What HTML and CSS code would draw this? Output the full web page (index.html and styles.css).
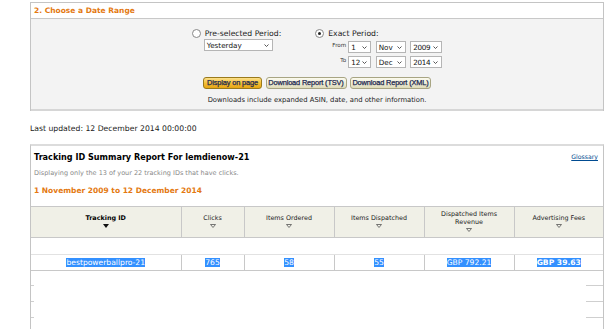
FILE: index.html
```html
<!DOCTYPE html>
<html>

	<head>
		<meta charset="UTF-8">
		<title>Tracking ID Summary Report</title>
		<link rel="stylesheet" href="styles.css">
	</head>

	<body>
		<div class="page">
			<div class="range">
				<div class="range-head">2. Choose a Date Range</div>
				<div class="range-body">
					<div class="periods">
						<div class="period">
							<div class="opt"><span class="radio"></span>Pre-selected Period:</div>
							<span class="sel sel-pre">Yesterday<svg width="5" height="3" viewBox="0 0 5 3"><path d="M0.5 0.5 L2.5 2.5 L4.5 0.5" fill="none" stroke="#444" stroke-width="0.9"/></svg></span>
						</div>
						<div class="period">
							<div class="opt"><span class="radio on"></span>Exact Period:</div>
							<div class="dates">
								<div class="date-row">
									<span class="date-lbl">From</span>
									<span class="sel sel-day">1<svg width="5" height="3" viewBox="0 0 5 3"><path d="M0.5 0.5 L2.5 2.5 L4.5 0.5" fill="none" stroke="#444" stroke-width="0.9"/></svg></span>
									<span class="sel sel-mon">Nov<svg width="5" height="3" viewBox="0 0 5 3"><path d="M0.5 0.5 L2.5 2.5 L4.5 0.5" fill="none" stroke="#444" stroke-width="0.9"/></svg></span>
									<span class="sel sel-year">2009<svg width="5" height="3" viewBox="0 0 5 3"><path d="M0.5 0.5 L2.5 2.5 L4.5 0.5" fill="none" stroke="#444" stroke-width="0.9"/></svg></span>
								</div>
								<div class="date-row">
									<span class="date-lbl">To</span>
									<span class="sel sel-day">12<svg width="5" height="3" viewBox="0 0 5 3"><path d="M0.5 0.5 L2.5 2.5 L4.5 0.5" fill="none" stroke="#444" stroke-width="0.9"/></svg></span>
									<span class="sel sel-mon">Dec<svg width="5" height="3" viewBox="0 0 5 3"><path d="M0.5 0.5 L2.5 2.5 L4.5 0.5" fill="none" stroke="#444" stroke-width="0.9"/></svg></span>
									<span class="sel sel-year">2014<svg width="5" height="3" viewBox="0 0 5 3"><path d="M0.5 0.5 L2.5 2.5 L4.5 0.5" fill="none" stroke="#444" stroke-width="0.9"/></svg></span>
								</div>
							</div>
						</div>
					</div>
					<div class="buttons">
						<span class="btn btn-go">Display on page</span>
						<span class="btn btn-dl">Download Report (TSV)</span>
						<span class="btn btn-dl">Download Report (XML)</span>
					</div>
					<p class="note">Downloads include expanded ASIN, date, and other information.</p>
				</div>
			</div>

			<p class="updated">Last updated: 12 December 2014 00:00:00</p>

			<div class="report">
				<div class="report-head">
					<div class="title-row">
						<h2>Tracking ID Summary Report For lemdienow-21</h2>
						<a href="#">Glossary</a>
					</div>
					<p class="sub">Displaying only the 13 of your 22 tracking IDs that have clicks.</p>
					<h3>1 November 2009 to 12 December 2014</h3>
				</div>
				<table class="grid">
					<colgroup>
						<col class="c1"><col class="c2"><col class="c3"><col class="c4"><col class="c5"><col class="c6">
					</colgroup>
					<tr class="head">
						<th><b>Tracking ID</b><br><svg width="6" height="4" viewBox="0 0 6 4"><path d="M0 0 H6 L3 4 Z" fill="#111"/></svg></th>
						<th>Clicks<br><svg width="6" height="4" viewBox="0 0 6 4"><path d="M0.5 0.5 H5.5 L3 3.5 Z" fill="none" stroke="#555" stroke-width="0.8"/></svg></th>
						<th>Items Ordered<br><svg width="6" height="4" viewBox="0 0 6 4"><path d="M0.5 0.5 H5.5 L3 3.5 Z" fill="none" stroke="#555" stroke-width="0.8"/></svg></th>
						<th>Items Dispatched<br><svg width="6" height="4" viewBox="0 0 6 4"><path d="M0.5 0.5 H5.5 L3 3.5 Z" fill="none" stroke="#555" stroke-width="0.8"/></svg></th>
						<th>Dispatched Items<br>Revenue<br><svg width="6" height="4" viewBox="0 0 6 4"><path d="M0.5 0.5 H5.5 L3 3.5 Z" fill="none" stroke="#555" stroke-width="0.8"/></svg></th>
						<th>Advertising Fees<br><svg width="6" height="4" viewBox="0 0 6 4"><path d="M0.5 0.5 H5.5 L3 3.5 Z" fill="none" stroke="#555" stroke-width="0.8"/></svg></th>
					</tr>
					<tr class="blank">
						<td></td><td></td><td></td><td></td><td></td><td></td>
					</tr>
					<tr class="data">
						<td><span class="hl">bestpowerballpro-21</span></td>
						<td><span class="hl">765</span></td>
						<td><span class="hl">58</span></td>
						<td><span class="hl">55</span></td>
						<td><span class="hl">GBP 792.21</span></td>
						<td><span class="hl strong">GBP 39.63</span></td>
					</tr>
				</table>
				<div class="tail">
					<div class="tail-row"><span class="stub-l"></span><span class="stub-r"></span></div>
					<div class="tail-row"><span class="stub-l"></span><span class="stub-r"></span></div>
					<div class="tail-row"><span class="stub-l"></span><span class="stub-r"></span></div>
				</div>
			</div>
		</div>
	</body>

</html>
```

FILE: styles.css
```css
* {
	margin: 0;
	padding: 0;
}

html,
body {
	background: #fff;
	overflow: hidden;
}

body {
	font-family: "DejaVu Sans", Verdana, sans-serif;
	font-size: 7.7px;
	color: #000;
}

.page {
	padding: 2px 3px 0 30px;
}

/* date range panel */
.range {
	border: 1px solid #c4c4c4;
	border-bottom: 0;
}

.range-head {
	height: 15px;
	line-height: 15px;
	padding-left: 3px;
	background: #fff;
	border-bottom: 1px solid #c8c8c8;
	color: #e47911;
	font-weight: bold;
	font-size: 7.5px;
}

.range-body {
	background: #f3f3f3;
	padding: 10px 0 5px;
	border-bottom: 2px solid #d6d6d6;
}

.periods {
	display: flex;
	justify-content: center;
	gap: 34px;
}

.opt {
	display: flex;
	align-items: center;
	height: 9px;
	line-height: 9px;
	color: #222;
}

.radio {
	width: 7px;
	height: 7px;
	border: 1px solid #888;
	border-radius: 50%;
	background: #fff;
	margin-right: 4px;
	position: relative;
}

.radio.on:after {
	content: "";
	position: absolute;
	left: 2px;
	top: 2px;
	width: 3px;
	height: 3px;
	border-radius: 50%;
	background: #222;
}

.sel {
	display: flex;
	align-items: center;
	justify-content: space-between;
	box-sizing: border-box;
	height: 12px;
	padding: 0 3px 0 2px;
	background: #fff;
	border: 1px solid #b5b5b5;
	color: #111;
	font-size: 7.2px;
}

.sel-pre {
	width: 69px;
	margin: 1px 0 0 12px;
}

.dates {
	margin: 3px 0 0 14px;
}

.date-row {
	display: flex;
	align-items: center;
	gap: 4.5px;
	margin-bottom: 3px;
}

.date-lbl {
	align-self: flex-start;
	width: 17px;
	margin-right: -2.5px;
	line-height: 8px;
	text-align: right;
	font-size: 5.6px;
	color: #333;
}

.sel-day {
	width: 23px;
}

.sel-mon {
	width: 30px;
}

.sel-year {
	width: 32px;
	letter-spacing: -0.3px;
}

.buttons {
	display: flex;
	justify-content: center;
	gap: 3.5px;
	margin-top: 6px;
}

.btn {
	box-sizing: border-box;
	height: 12px;
	line-height: 10px;
	border-radius: 3px;
	text-align: center;
	font-family: "Liberation Sans", Arial, sans-serif;
	font-size: 7.4px;
	letter-spacing: -0.15px;
	-webkit-text-stroke: 0.25px #1c2850;
	color: #1c2850;
	white-space: nowrap;
}

.btn-go {
	width: 59px;
	border: 1px solid #9a7a1c;
	background: linear-gradient(#fbe08a, #f3bd32 55%, #e7a614);
}

.btn-dl {
	width: 81px;
	border: 1px solid #a8a583;
	background: linear-gradient(#fbfaee, #ecead2 60%, #dedbb9);
}

.note {
	margin-top: 8px;
	line-height: 7px;
	font-size: 6.8px;
	text-align: center;
	color: #222;
}

.updated {
	margin: 13px 0 11px;
	line-height: 9px;
	color: #222;
}

/* report box */
.report {
	border: 1px solid #c4c4c4;
	border-top: 2px solid #dcdcdc;
	border-bottom: 0;
}

.report-head {
	padding: 6px 5px 0 3px;
}

.title-row {
	display: flex;
	justify-content: space-between;
	align-items: flex-start;
}

.title-row h2 {
	line-height: 10px;
	font-size: 8.1px;
	color: #000;
}

.title-row a {
	margin-top: 1px;
	font-size: 6.2px;
	line-height: 7px;
	color: #004b91;
}

.sub {
	margin-top: 8px;
	line-height: 7px;
	font-size: 6.5px;
	color: #888;
}

.report-head h3 {
	margin-top: 9px;
	line-height: 10px;
	font-size: 7.5px;
	color: #e47911;
}

.grid {
	margin-top: 10px;
	width: 572px;
	border-collapse: collapse;
	table-layout: fixed;
}

.grid .c1 { width: 150px; }
.grid .c2 { width: 63px; }
.grid .c3 { width: 90px; }
.grid .c4 { width: 90px; }
.grid .c5 { width: 90px; }
.grid .c6 { width: 89px; }

.head th {
	height: 30px;
	padding: 0;
	background: #f0f0e7;
	border-top: 1px solid #c8c8c8;
	border-bottom: 1px solid #c8c8c8;
	border-left: 1px solid #c8c8c8;
	font-weight: normal;
	font-size: 6.4px;
	line-height: 8px;
	color: #222;
	vertical-align: middle;
}

.head th:first-child {
	border-left: 0;
}

.head th b {
	color: #000;
}

.head th svg {
	display: inline-block;
	margin-top: 1px;
}

.blank td {
	height: 16px;
	padding: 0;
}

.data td {
	height: 15px;
	padding: 0;
	text-align: center;
	border-top: 1px solid #e2e2e2;
	border-bottom: 1px solid #c8c8c8;
	border-left: 1px solid #c8c8c8;
	font-size: 7.6px;
	line-height: 10px;
}

.data td:first-child {
	border-left: 0;
}

.hl {
	background: #3390ff;
	color: #fff;
}

.hl.strong {
	font-weight: bold;
}

.tail {
	height: 60px;
}

.tail-row {
	display: flex;
	justify-content: space-between;
	height: 16px;
}

.tail-row:first-child {
	height: 15px;
}

.stub-l,
.stub-r {
	border-bottom: 1px solid #cfcfcf;
}

.stub-l {
	width: 3px;
}

.stub-r {
	width: 17px;
}
```
